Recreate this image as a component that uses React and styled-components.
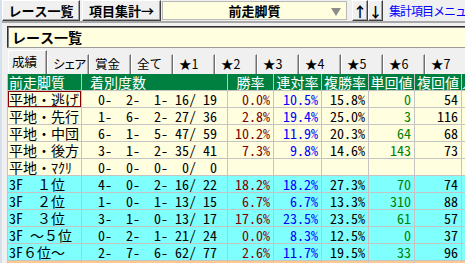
import React from 'react';
import styled, { createGlobalStyle } from 'styled-components';

const GlobalStyle = createGlobalStyle`
    html, body {
        margin: 0;
        padding: 0;
        background: #f0f0f0;
        overflow: hidden;
    }
`;

const GOTHIC = `"Noto Sans Mono CJK JP", "Noto Sans CJK JP", "DejaVu Sans Mono", monospace`;
const UI_GOTHIC = `"Noto Sans CJK JP", "DejaVu Sans", sans-serif`;

const StyledApp = styled.div`
    width: 465px;
    height: 263px;
    overflow: hidden;
    background: #f0f0f0;
    border-left: 2px solid #d4e0ec;
    box-sizing: border-box;
    font-family: ${GOTHIC};
`;

const TopBar = styled.div`
    display: flex;
    align-items: flex-start;
    height: 21px;
    border-bottom: 2px solid #a8a8a8;
    white-space: nowrap;
    overflow: hidden;
`;

const ToolButton = styled.button`
    flex: none;
    width: ${p => p.$w}px;
    height: 21px;
    margin-right: ${p => p.$mr || 0}px;
    padding: 0;
    background: #f0f0f0;
    border: 1px solid;
    border-color: #ffffff #404040 #404040 #ffffff;
    box-shadow: inset -1px -1px 0 #a0a0a0;
    font-family: ${GOTHIC};
    font-size: ${p => p.$fs || 13}px;
    font-weight: 700;
    color: #000;
    display: flex;
    align-items: center;
    justify-content: center;
`;

const Dropdown = styled.div`
    flex: none;
    width: 185px;
    height: 19px;
    margin: 1px 5px 0 1px;
    box-sizing: border-box;
    background: #ffffe0;
    border: 1px solid #b8b8b8;
    position: relative;
    display: flex;
    align-items: center;
    justify-content: center;
    font-size: 13px;
    font-weight: 700;
`;

const DropArrow = styled.span`
    position: absolute;
    right: 5px;
    top: 6px;
    width: 0;
    height: 0;
    border-left: 5px solid transparent;
    border-right: 5px solid transparent;
    border-top: 8px solid #8c8c8c;
`;

const MenuLink = styled.span`
    margin-left: 6px;
    line-height: 21px;
    font-family: ${UI_GOTHIC};
    font-size: 12px;
    letter-spacing: -1px;
    color: #0000ff;
`;

const Body = styled.div`
    padding-left: 5px;
`;

const TitleBox = styled.div`
    margin-top: 3px;
    height: 22px;
    box-sizing: border-box;
    margin-right: -10px;
    background: #ffffe0;
    border: 1px solid #9a9a9a;
    border-top-color: #303030;
    border-left-color: #303030;
    box-shadow: inset 1px 1px 0 #808080;
    padding-left: 4px;
    line-height: 20px;
    font-size: 14px;
    font-weight: 700;
`;

const TabBar = styled.div`
    display: flex;
    align-items: flex-end;
    height: 26px;
    padding-left: 1px;
    white-space: nowrap;
`;

const Tab = styled.div`
    flex: none;
    width: ${p => (p.$active ? 39 : 42)}px;
    height: ${p => (p.$active ? 24 : 20)}px;
    box-sizing: border-box;
    padding: ${p => (p.$active ? '3px' : '1px')} 0 0 ${p => (p.$active ? '3px' : '5px')};
    border-left: 1px solid #ffffff;
    border-right: 1px solid #707070;
    border-top: 1px solid ${p => (p.$active ? '#ffffff' : '#f0f0f0')};
    box-shadow: inset -1px 0 0 #b0b0b0;
    background: #f0f0f0;
    font-family: ${UI_GOTHIC};
    font-size: 12.5px;
    letter-spacing: ${p => (p.$tight ? -2 : 0)}px;
    line-height: 16px;
    overflow: hidden;
`;

const Grid = styled.div`
    display: grid;
    grid-template-columns: 73px 145px 45px 47px 46px 45px 46px 40px;
    grid-auto-rows: 16px;
    gap: 1px;
    width: 560px;
    background: #c4c4c4;
    border-left: 1px solid #c4c4c4;
    font-size: 14px;
`;

const Head = styled.div`
    background: #008040;
    color: #ffffff;
    line-height: 16px;
    white-space: pre;
    overflow: hidden;
    text-align: ${p => p.$align || 'center'};
    padding-left: ${p => p.$pl || 0}px;
`;

const rowBg = { plain: '#ffffe0', fast: '#80ffff', tail: '#ffc890' };
const ink = { win: '#800000', ren: '#0000ff', fuku: '#000000', tan: '#008000', fk: '#000000' };

const Cell = styled.div`
    background: ${p => rowBg[p.$bg]};
    color: ${p => ink[p.$ink] || '#000'};
    white-space: pre;
    overflow: hidden;
    box-sizing: border-box;
    text-align: ${p => p.$align || 'right'};
    padding: 0 ${p => p.$pr ?? 3}px 0 ${p => p.$pl || 0}px;
    border: ${p => (p.$selected ? '1px solid #8b0000' : 'none')};
    line-height: ${p => (p.$selected ? 14 : 16)}px;
`;

const rows = [
    { name: '平地・逃げ', rec: '0-  2-  1- 16/ 19', win: '0.0%', ren: '10.5%', fuku: '15.8%', tan: '0', fk: '54', bg: 'plain', selected: true },
    { name: '平地・先行', rec: '1-  6-  2- 27/ 36', win: '2.8%', ren: '19.4%', fuku: '25.0%', tan: '3', fk: '116', bg: 'plain' },
    { name: '平地・中団', rec: '6-  1-  5- 47/ 59', win: '10.2%', ren: '11.9%', fuku: '20.3%', tan: '64', fk: '68', bg: 'plain' },
    { name: '平地・後方', rec: '3-  1-  2- 35/ 41', win: '7.3%', ren: '9.8%', fuku: '14.6%', tan: '143', fk: '73', bg: 'plain' },
    { name: '平地・ﾏｸﾘ', rec: '0-  0-  0-  0/  0', win: '', ren: '', fuku: '', tan: '', fk: '', bg: 'plain' },
    { name: '3F  １位', rec: '4-  0-  2- 16/ 22', win: '18.2%', ren: '18.2%', fuku: '27.3%', tan: '70', fk: '74', bg: 'fast' },
    { name: '3F  ２位', rec: '1-  0-  1- 13/ 15', win: '6.7%', ren: '6.7%', fuku: '13.3%', tan: '310', fk: '88', bg: 'fast' },
    { name: '3F  ３位', rec: '3-  1-  0- 13/ 17', win: '17.6%', ren: '23.5%', fuku: '23.5%', tan: '61', fk: '57', bg: 'fast' },
    { name: '3F ～５位', rec: '0-  2-  1- 21/ 24', win: '0.0%', ren: '8.3%', fuku: '12.5%', tan: '0', fk: '37', bg: 'fast' },
    { name: '3F６位～', rec: '2-  7-  6- 62/ 77', win: '2.6%', ren: '11.7%', fuku: '19.5%', tan: '33', fk: '96', bg: 'fast' },
];

const tabs = ['成績', 'シェア', '賞金', '全て', '★1', '★2', '★3', '★4', '★5', '★6', '★7'];
const heads = ['勝率', '連対率', '複勝率', '単回値', '複回値'];

const App = () => (
    <StyledApp>
        <GlobalStyle />
        <TopBar>
            <ToolButton $w={78} $mr={2}>レース一覧</ToolButton>
            <ToolButton $w={79}>項目集計→</ToolButton>
            <Dropdown>
                前走脚質
                <DropArrow />
            </Dropdown>
            <ToolButton $w={16} $fs={14}>↑</ToolButton>
            <ToolButton $w={15} $fs={14}>↓</ToolButton>
            <MenuLink>集計項目メニュー</MenuLink>
        </TopBar>
        <Body>
            <TitleBox>レース一覧</TitleBox>
            <TabBar>
                {tabs.map((t, i) => (
                    <Tab key={t} $active={i === 0} $tight={t === 'シェア'}>{t}</Tab>
                ))}
            </TabBar>
            <Grid>
                <Head $align='left' $pl={1}>前走脚質</Head>
                <Head $align='left' $pl={8}>着別度数</Head>
                {heads.map(h => <Head key={h}>{h}</Head>)}
                <Head $align='left'>人気</Head>
                {rows.map(r => (
                    <React.Fragment key={r.name}>
                        <Cell $bg={r.bg} $align='left' $pl={r.selected ? 0 : 1} $selected={r.selected}>{r.name}</Cell>
                        <Cell $bg={r.bg} $pr={10}>{r.rec}</Cell>
                        <Cell $bg={r.bg} $ink='win'>{r.win}</Cell>
                        <Cell $bg={r.bg} $ink='ren'>{r.ren}</Cell>
                        <Cell $bg={r.bg} $ink='fuku'>{r.fuku}</Cell>
                        <Cell $bg={r.bg} $ink='tan'>{r.tan}</Cell>
                        <Cell $bg={r.bg} $ink='fk'>{r.fk}</Cell>
                        <Cell $bg={r.bg} />
                    </React.Fragment>
                ))}
                {Array.from({ length: 8 }, (_, i) => <Cell key={i} $bg='tail' />)}
            </Grid>
        </Body>
    </StyledApp>
);

export default App;
